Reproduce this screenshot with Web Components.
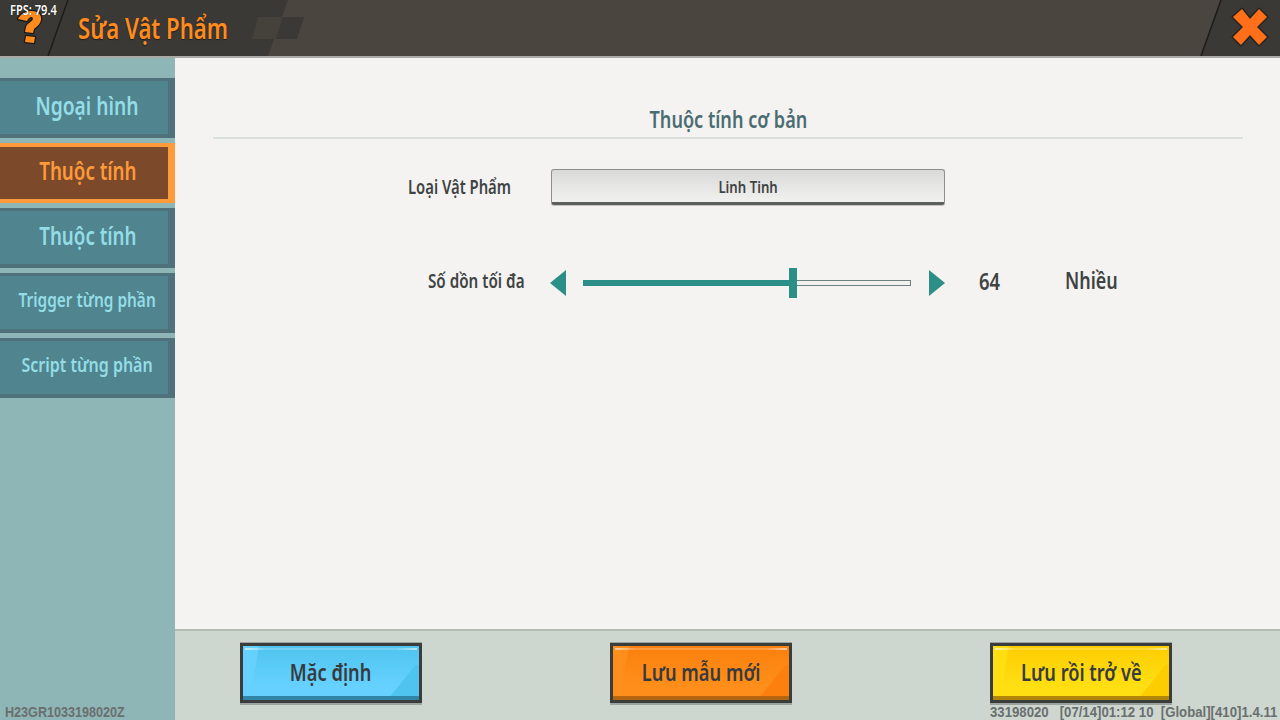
<!DOCTYPE html>
<html lang="vi">
<head>
<meta charset="utf-8">
<title>Sửa Vật Phẩm</title>
<style>
  html, body { margin: 0; height: 100%; }
  body {
    width: 1280px;
    height: 720px;
    overflow: hidden;
    font-family: "Noto Sans", "Open Sans", sans-serif;
    font-weight: 600;
  }
</style>
</head>
<body>
<x-editor-page>
  <x-topbar slot="top" heading="Sửa Vật Phẩm"></x-topbar>
  <x-side-tab slot="side" size="25" narrow=".77">Ngoại hình</x-side-tab>
  <x-side-tab slot="side" size="25" narrow=".75" active>Thuộc tính</x-side-tab>
  <x-side-tab slot="side" size="25" narrow=".75">Thuộc tính</x-side-tab>
  <x-side-tab slot="side" size="20" narrow=".77">Trigger từng phần</x-side-tab>
  <x-side-tab slot="side" size="20" narrow=".8">Script từng phần</x-side-tab>
  <x-section-title slot="main">Thuộc tính cơ bản</x-section-title>
  <x-select-row slot="main" label="Loại Vật Phẩm" value="Linh Tinh"></x-select-row>
  <x-slider-row slot="main" label="Số dồn tối đa" value="64" percent="64" note="Nhiều"></x-slider-row>
  <x-action-button slot="foot" tone="blue">Mặc định</x-action-button>
  <x-action-button slot="foot" tone="orange">Lưu mẫu mới</x-action-button>
  <x-action-button slot="foot" tone="yellow">Lưu rồi trở về</x-action-button>
</x-editor-page>

<script>
// No condensed face is installed, so text is narrowed with scaleX
const NARROW = `
  .c {
    display: inline-block;
    white-space: pre;
    transform: scaleX(var(--sx, .8));
    transform-origin: var(--origin, center);
  }
`;

class EditorPage extends HTMLElement {
  constructor() {
    super();
    this.attachShadow({ mode: "open" });
    this.shadowRoot.innerHTML = /*html*/ `
    <style>
      ${NARROW}
      :host {
        display: grid;
        position: relative;
        width: 1280px;
        height: 720px;
        grid-template: 58px 1fr 91px / 175px 1fr;
        grid-template-areas: "top top" "side main" "side foot";
        background: #f4f3f1;
        overflow: hidden;
      }
      .top { grid-area: top; display: block; }
      .side {
        grid-area: side;
        display: flex;
        flex-direction: column;
        gap: 5px;
        padding-top: 20px;
        background: #8fb6b6;
      }
      .main {
        grid-area: main;
        display: flex;
        flex-direction: column;
        padding: 44px 37px 0 38px;
      }
      .foot {
        grid-area: foot;
        display: flex;
        gap: 188px;
        box-sizing: border-box;
        padding: 12px 0 0 65px;
        background: #cdd7d0;
        border-top: 2px solid #b3bdb6;
      }
      ::slotted(x-action-button:last-child) { margin-left: 10px; }
      .stamp, .fps { position: absolute; --origin: left; }
      .stamp {
        bottom: 0;
        font-family: "Liberation Sans", sans-serif;
        font-size: 15px;
        font-weight: 700;
        line-height: 17px;
        color: #6a6f6f;
      }
      .fps {
        left: 10px;
        top: 2px;
        font-size: 14px;
        line-height: 16px;
        color: #fff;
        text-shadow: 0 0 1px #000;
      }
    </style>
    <div class="top"><slot name="top"></slot></div>
    <div class="side"><slot name="side"></slot></div>
    <div class="main"><slot name="main"></slot></div>
    <div class="foot"><slot name="foot"></slot></div>
    <div class="fps"><span class="c" style="--sx:.79">FPS: 79.4</span></div>
    <div class="stamp" style="left:5px"><span class="c" style="--sx:.84">H23GR1033198020Z</span></div>
    <div class="stamp" style="left:990px"><span class="c" style="--sx:.879">33198020   [07/14]01:12 10  [Global][410]1.4.11</span></div>
    `;
  }
}

class Topbar extends HTMLElement {
  constructor() {
    super();
    this.attachShadow({ mode: "open" });
    this.shadowRoot.innerHTML = /*html*/ `
    <style>
      ${NARROW}
      :host {
        display: flex;
        align-items: center;
        position: relative;
        height: 58px;
        box-sizing: border-box;
        border-bottom: 2px solid #a9a9a5;
        background: #3a3935;
        overflow: hidden;
      }
      .deco { position: absolute; inset: 0; width: 100%; height: 100%; }
      .help { position: relative; width: 36px; height: 36px; margin: 0 0 0 12px; flex: none; }
      h1 {
        position: relative;
        margin: 0 0 0 30px;
        font-size: 28px;
        font-weight: 600;
        line-height: 52px;
        color: #ff8a1e;
        text-shadow: 0 1px 1px #1d1c1a;
        --sx: .79;
        --origin: left;
      }
      .close {
        position: absolute;
        right: 11px;
        top: 7px;
        width: 38px;
        height: 40px;
      }
    </style>
    <svg class="deco" viewBox="0 0 1280 56" preserveAspectRatio="none">
      <polygon points="288,0 1221,0 1201,56 268,56" fill="#4a453f"/>
      <polygon points="258,17 283,17 276,39 252,39" fill="#45423c"/>
      <polygon points="283,17 304,17 297,39 276,39" fill="#3a3935"/>
      <line x1="68" y1="0" x2="48" y2="56" stroke="#1d1c1a" stroke-width="1.5"/>
      <line x1="1221" y1="0" x2="1201" y2="56" stroke="#1d1c1a" stroke-width="1.5"/>
    </svg>
    <svg class="help" viewBox="0 0 36 36">
      <path d="M6 9 C9 3 15 1 20 1 C26 1 30 5 29 10 C28 15 24 17 22 19 L21 23 L13 22 L14 17 C15 13 20 12 21 9 C21 6 17 6 15 11 Z M14 26 L23 27 L22 33 L13 32 Z"
        fill="#ff8a1e" stroke="#1a1916" stroke-width="2.5" stroke-linejoin="round" paint-order="stroke"/>
    </svg>
    <h1><span class="c">${this.getAttribute("heading")}</span></h1>
    <svg class="close" viewBox="0 0 38 40">
      <polygon points="11,2 19,12 28,2 36,10 26,20 36,30 28,38 19,28 10,38 2,30 12,20 2,10"
        fill="#ff6f1a" stroke="#26241f" stroke-width="3" stroke-linejoin="round" paint-order="stroke"/>
    </svg>
    `;
  }
}

class SideTab extends HTMLElement {
  constructor() {
    super();
    this.attachShadow({ mode: "open" });
    this.shadowRoot.innerHTML = /*html*/ `
    <style>
      ${NARROW}
      :host {
        display: flex;
        align-items: center;
        justify-content: center;
        box-sizing: border-box;
        height: 60px;
        padding: 0 0 6px 7px;
        background: #50848f;
        border: solid #4e717c;
        border-width: 3px 7px 4px 0;
        color: #94dde6;
        font-size: var(--size, 25px);
        font-weight: 600;
      }
      :host([active]) {
        background: #7c4a2a;
        border-color: #ff9a3a;
        border-width: 4px 7px 4px 0;
        color: #ff9a3a;
      }
    </style>
    <span class="c"><slot></slot></span>
    `;
    this.style.setProperty("--size", (this.getAttribute("size") || 25) + "px");
    this.style.setProperty("--sx", this.getAttribute("narrow") || ".78");
  }
}

class SectionTitle extends HTMLElement {
  constructor() {
    super();
    this.attachShadow({ mode: "open" });
    this.shadowRoot.innerHTML = /*html*/ `
    <style>
      ${NARROW}
      :host {
        display: block;
        box-sizing: border-box;
        height: 37px;
        text-align: center;
        font-size: 23.5px;
        line-height: 35px;
        color: #4b6d72;
        border-bottom: 2px solid #d9e1da;
      }
    </style>
    <span class="c" style="--sx:.77"><slot></slot></span>
    `;
  }
}

class SelectRow extends HTMLElement {
  constructor() {
    super();
    this.attachShadow({ mode: "open" });
    this.shadowRoot.innerHTML = /*html*/ `
    <style>
      ${NARROW}
      :host {
        display: flex;
        align-items: center;
        margin-top: 29px;
        height: 38px;
        padding-left: 195px;
        color: #3f4343;
      }
      label { width: 143px; font-size: 19px; --sx: .78; --origin: left; }
      .box {
        box-sizing: border-box;
        width: 394px;
        height: 36px;
        display: flex;
        align-items: center;
        justify-content: center;
        font-size: 16.5px;
        border-radius: 3px;
        border: 1px solid #8e8e8c;
        border-bottom: 3px solid #5d5f5e;
        background: linear-gradient(#d9d9d8, #f1f1f0);
        box-shadow: 0 1px 0 #c4c4c2;
      }
    </style>
    <label><span class="c">${this.getAttribute("label")}</span></label>
    <div class="box"><span class="c">${this.getAttribute("value")}</span></div>
    `;
  }
}

class SliderRow extends HTMLElement {
  constructor() {
    super();
    this.attachShadow({ mode: "open" });
    this.shadowRoot.innerHTML = /*html*/ `
    <style>
      ${NARROW}
      :host {
        display: flex;
        align-items: center;
        margin-top: 62px;
        height: 30px;
        padding-left: 215px;
        color: #3f4343;
        --origin: left;
      }
      label { width: 122px; font-size: 19px; margin-top: -4px; }
      svg { flex: none; width: 16px; height: 26px; fill: #2b8f88; }
      .track {
        position: relative;
        flex: none;
        width: 328px;
        height: 6px;
        margin: 0 18px 0 17px;
        box-sizing: border-box;
        background: #f1f1ef;
        border: 1px solid #6d8280;
      }
      .fill {
        position: absolute;
        left: -1px;
        top: -1px;
        bottom: -1px;
        background: #2b8f88;
      }
      .thumb {
        position: absolute;
        top: -13px;
        width: 8px;
        height: 30px;
        margin-left: -4px;
        background: #2b8f88;
      }
      .num { width: 86px; margin: -4px 0 0 34px; font-size: 23px; }
      .note { font-size: 23px; margin-top: -6px; --sx: .78; }
    </style>
    <label><span class="c">${this.getAttribute("label")}</span></label>
    <svg viewBox="0 0 16 26"><polygon points="16,0 16,26 0,13"/></svg>
    <div class="track">
      <div class="fill" style="width:${this.getAttribute("percent")}%"></div>
      <div class="thumb" style="left:${this.getAttribute("percent")}%"></div>
    </div>
    <svg viewBox="0 0 16 26"><polygon points="0,0 0,26 16,13"/></svg>
    <span class="num"><span class="c">${this.getAttribute("value")}</span></span>
    <span class="note"><span class="c">${this.getAttribute("note")}</span></span>
    `;
  }
}

const TONES = {
  blue: ["#66d1ff", "#4fc4ee", "#2f86a6"],
  orange: ["#ff8f1a", "#fb800e", "#b5660f"],
  yellow: ["#ffdf12", "#fdcd02", "#b18608"],
};

class ActionButton extends HTMLElement {
  constructor() {
    super();
    this.attachShadow({ mode: "open" });
    const [base, dark, edge] = TONES[this.getAttribute("tone")];
    this.shadowRoot.innerHTML = /*html*/ `
    <style>
      ${NARROW}
      :host {
        display: flex;
        position: relative;
        align-items: center;
        justify-content: center;
        box-sizing: border-box;
        width: 182px;
        height: 60px;
        padding-bottom: 4px;
        border: 3px solid #3a3d3c;
        box-shadow: 0 2px 0 #9aa39d, 0 -1px 0 #9aa39d;
        background: ${base};
        color: #373b3e;
        font-size: 24px;
        overflow: hidden;
      }
      .shade {
        position: absolute;
        inset: 0;
        background: linear-gradient(${dark}, ${base} 75%);
        clip-path: polygon(9% 0, 100% 0, 100% 100%, 4% 100%);
      }
      .corner {
        position: absolute;
        inset: 0;
        background: ${dark};
        clip-path: polygon(98% 35%, 100% 35%, 100% 100%, 82% 100%);
      }
      .gloss {
        position: absolute;
        left: 2px;
        right: 2px;
        top: 2px;
        height: 2px;
        background: linear-gradient(90deg, #fff9, #fff3 12%, #fff3 88%, #fff9);
      }
      .lip {
        position: absolute;
        left: 0;
        right: 0;
        bottom: 0;
        height: 4px;
        background: ${edge};
      }
      .c { position: relative; }
    </style>
    <div class="shade"></div>
    <div class="corner"></div>
    <div class="gloss"></div>
    <div class="lip"></div>
    <span class="c" style="--sx:.76"><slot></slot></span>
    `;
  }
}

customElements.define("x-editor-page", EditorPage);
customElements.define("x-topbar", Topbar);
customElements.define("x-side-tab", SideTab);
customElements.define("x-section-title", SectionTitle);
customElements.define("x-select-row", SelectRow);
customElements.define("x-slider-row", SliderRow);
customElements.define("x-action-button", ActionButton);
</script>
</body>
</html>
